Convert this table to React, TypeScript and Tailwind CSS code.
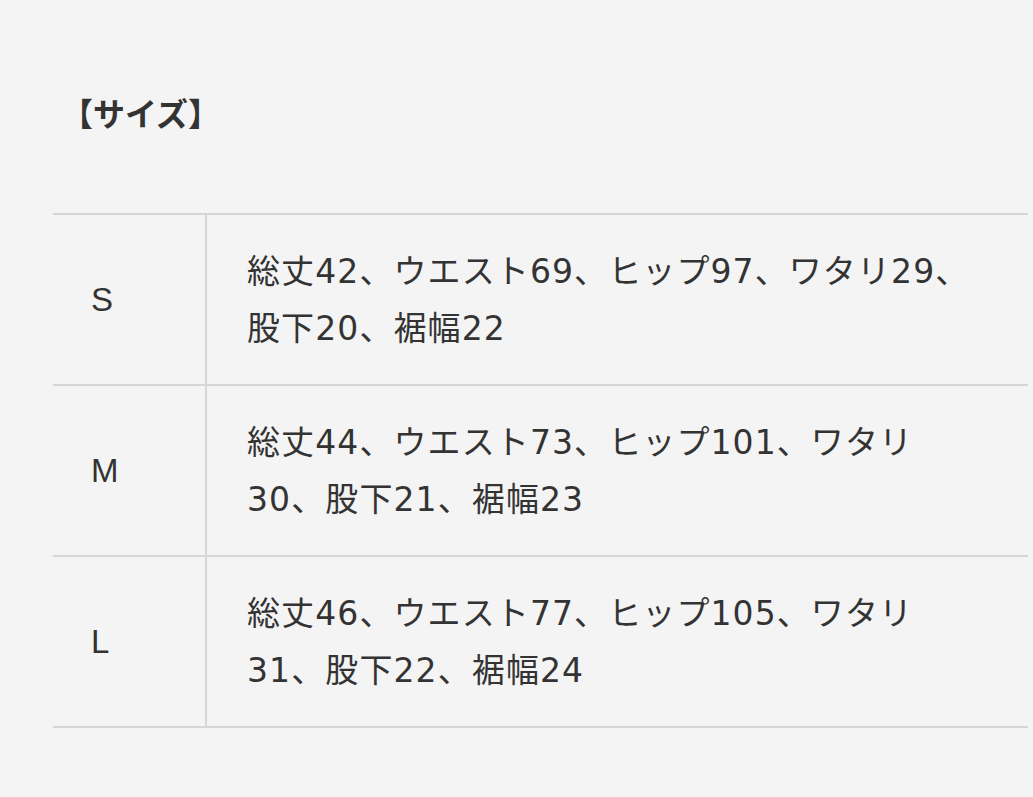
import React from 'react'

const sizes = [
  { label: 'S', lines: ['総丈42、ウエスト69、ヒップ97、ワタリ29、', '股下20、裾幅22'] },
  { label: 'M', lines: ['総丈44、ウエスト73、ヒップ101、ワタリ', '30、股下21、裾幅23'] },
  { label: 'L', lines: ['総丈46、ウエスト77、ヒップ105、ワタリ', '31、股下22、裾幅24'] },
]

const App: React.FC = () => {
  return (
    <div
      className="min-h-screen bg-[#f4f4f4] pl-[53px] pr-[5px] pt-[87px] text-[#333333]"
      style={{ fontFamily: '"Liberation Sans", "Noto Sans CJK JP", sans-serif' }}
    >
      {/* Heading */}
      <h2 className="pl-[8px] text-[32px] font-bold leading-[56px]">【サイズ】</h2>

      {/* Size table */}
      <div className="mt-[70px] border-b-2 border-[#d6d6d6]">
        {sizes.map((size) => (
          <div
            key={size.label}
            className="grid grid-cols-[154px_1fr] border-t-2 border-[#d6d6d6]"
          >
            <div className="flex items-center border-r-2 border-[#d6d6d6] pl-[38px] text-[33px]">
              {size.label}
            </div>
            <div className="pb-[27px] pl-[40px] pt-[28px] font-['DejaVu_Sans','Noto_Sans_CJK_JP',sans-serif] text-[33px] leading-[57px] tracking-[1.1px]">
              {size.lines.map((line, i) => (
                <div key={i} className="whitespace-nowrap">
                  {line}
                </div>
              ))}
            </div>
          </div>
        ))}
      </div>
    </div>
  )
}

export default App
